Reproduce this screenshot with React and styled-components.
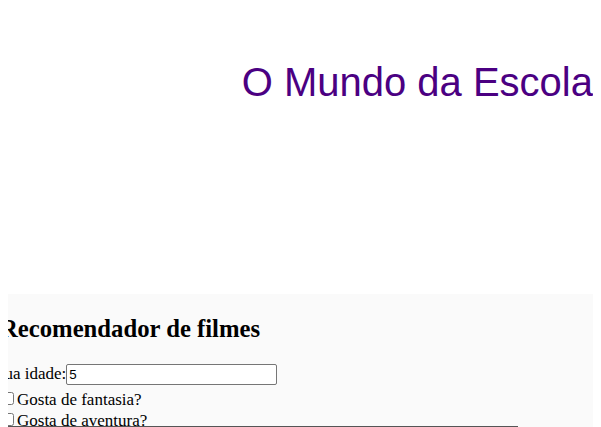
import React from "react";
import styled, { createGlobalStyle } from "styled-components";

const GlobalStyle = createGlobalStyle`
  html, body { background: #ffffff; }
  body {
    margin: 8px;
    font-family: "Liberation Serif", "Times New Roman", serif;
    font-size: 17px;
    color: #000;
  }
`;

const Header = styled.header`
  height: 286px;
  box-sizing: border-box;
  padding-top: 52px;
`;

const Title = styled.div`
  text-align: right;
  font-family: "Liberation Sans", Arial, sans-serif;
  font-size: 40px;
  color: #4b0082;
  line-height: normal;
`;

const Section = styled.section`
  margin: 0 -8px;
  background: #fafafa;
  display: flow-root;
  min-height: 200px;
`;

const Heading = styled.h2`
  font-size: 24.7px;
  font-weight: bold;
  margin: 20.7px 0 21.2px;
`;

const Form = styled.form`
  margin: 0;
`;

const AgeRow = styled.div`
  margin-left: -5px;
  height: 25px;
`;

const CheckRow = styled.div`
  height: 21px;
`;

const TextInput = styled.input`
  width: 211px;
  height: 21px;
  box-sizing: border-box;
  border: 1px solid #767676;
  border-radius: 2px;
  padding: 1px 2px;
  font-family: "Liberation Sans", Arial, sans-serif;
  font-size: 13.33px;
  background: #fff;
  vertical-align: baseline;
`;

const Check = styled.input`
  margin: 3px 3px 3px 1px;
`;

const Box = styled.div`
  width: 518px;
  margin-top: -5px;
  border-top: 2px solid #555;
  height: 40px;
`;

export default function App() {
  return (
    <>
      <GlobalStyle />
      <Header>
        <Title>O Mundo da Escola</Title>
      </Header>
      <Section>
        <Heading>Recomendador de filmes</Heading>
        <Form>
          <AgeRow>
            <label>Sua idade:</label>
            <TextInput type="text" defaultValue="5" />
          </AgeRow>
          <CheckRow>
            <label>
              <Check type="checkbox" />Gosta de fantasia?
            </label>
          </CheckRow>
          <CheckRow>
            <label>
              <Check type="checkbox" />Gosta de aventura?
            </label>
          </CheckRow>
          <Box />
        </Form>
      </Section>
    </>
  );
}
